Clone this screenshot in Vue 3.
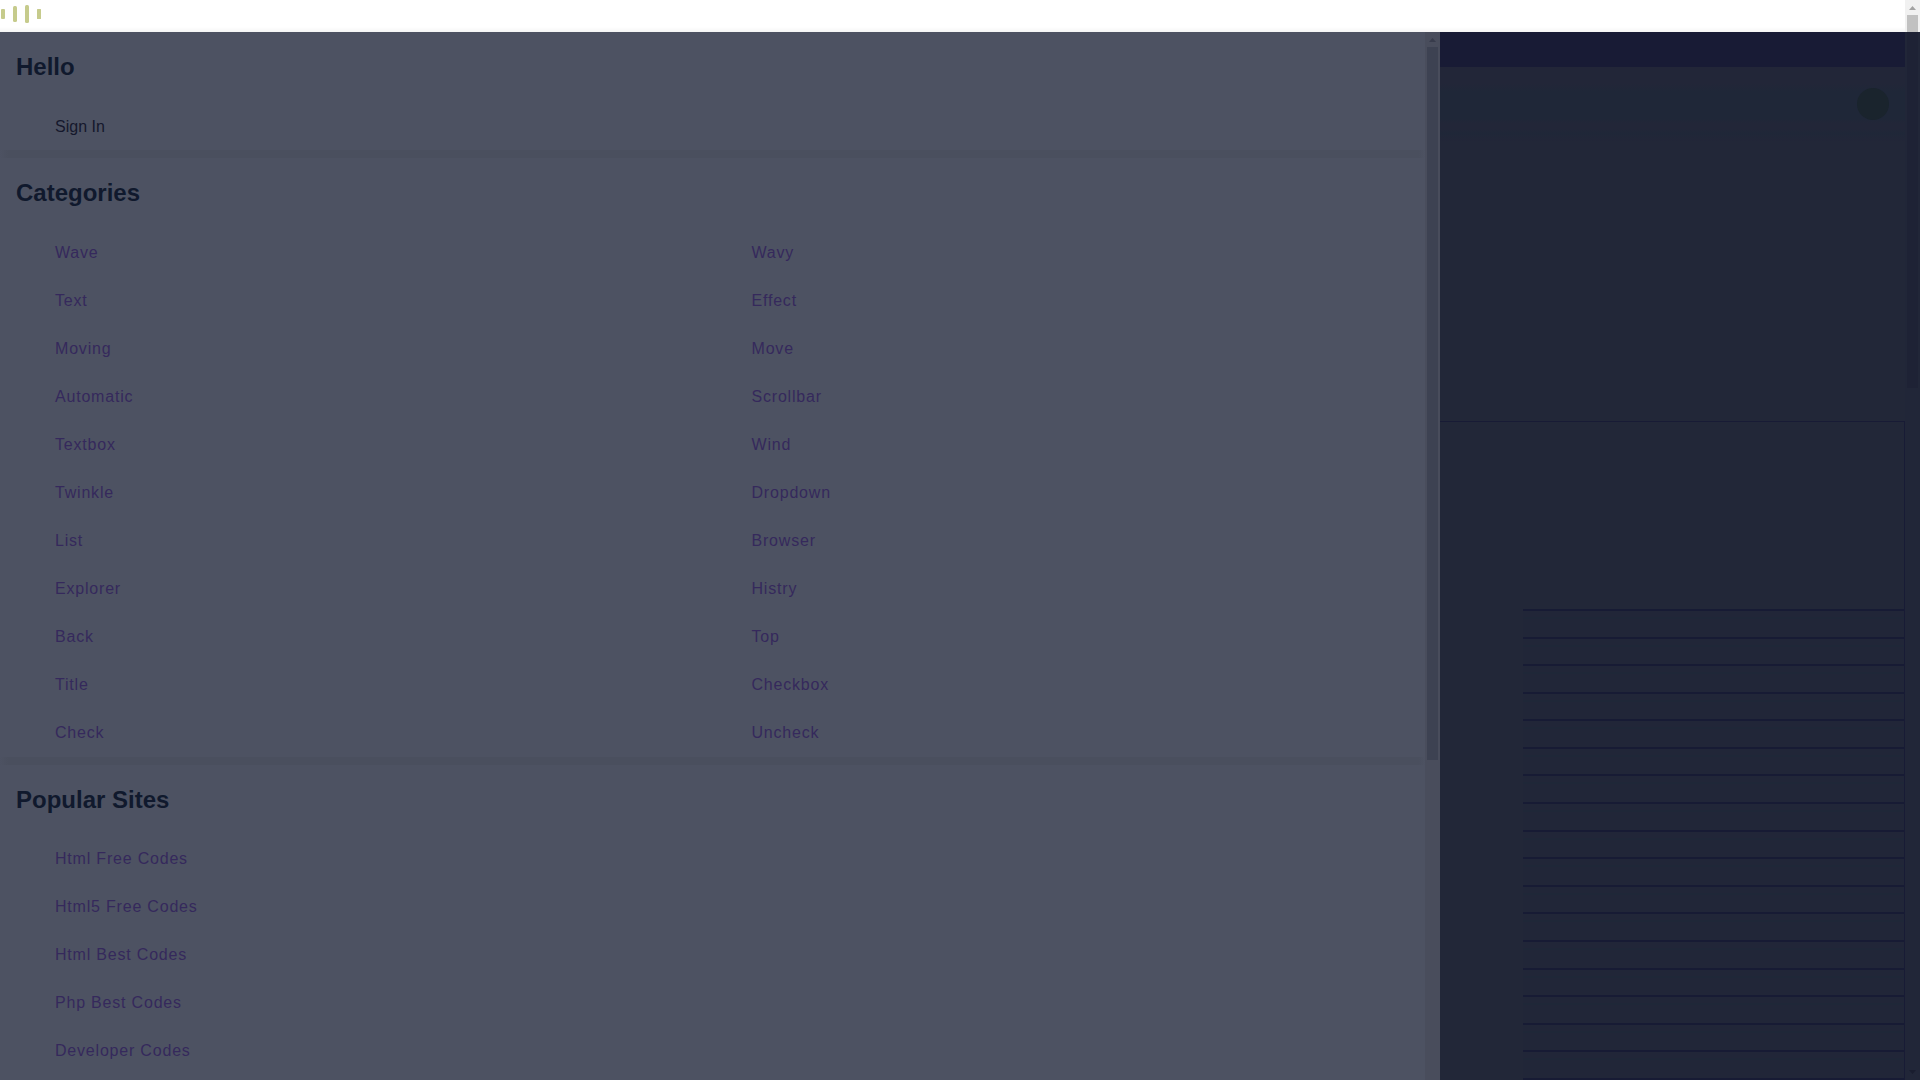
<script setup>
const categories = [
  'Wave', 'Wavy', 'Text', 'Effect', 'Moving', 'Move', 'Automatic', 'Scrollbar',
  'Textbox', 'Wind', 'Twinkle', 'Dropdown', 'List', 'Browser', 'Explorer', 'Histry',
  'Back', 'Top', 'Title', 'Checkbox', 'Check', 'Uncheck',
]
const sites = ['Html Free Codes', 'Html5 Free Codes', 'Html Best Codes', 'Php Best Codes', 'Developer Codes']
</script>

<template>
  <div class="page">
    <div class="main">
      <header class="loader-bar">
        <svg width="42" height="28" viewBox="0 0 42 28" fill="#c6cb8c" aria-hidden="true">
          <rect x="1" y="9" width="4" height="10" rx="1" />
          <rect x="13" y="6" width="4" height="16" rx="1.5" />
          <rect x="25" y="5" width="4" height="18" rx="1.5" />
          <rect x="37" y="9" width="4" height="10" rx="0.5" />
        </svg>
      </header>
      <div class="body">
        <aside class="drawer">
          <nav class="menu">
            <section>
              <h2>Hello</h2>
              <ul>
                <li><a class="sign-in" href="#signin">Sign In</a></li>
              </ul>
            </section>
            <div class="divider"></div>
            <section>
              <h2>Categories</h2>
              <ul class="two-columns">
                <li v-for="name in categories" :key="name"><a :href="'#' + name">{{ name }}</a></li>
              </ul>
            </section>
            <div class="divider"></div>
            <section>
              <h2>Popular Sites</h2>
              <ul>
                <li v-for="name in sites" :key="name"><a href="#sites">{{ name }}</a></li>
              </ul>
            </section>
          </nav>
          <div class="scroll inner">
            <span class="arrow up"></span>
            <span class="thumb"></span>
          </div>
        </aside>
        <main class="content">
          <div class="strip"></div>
          <div class="toolbar"><span class="avatar"></span></div>
          <div class="hero"></div>
          <div class="panel">
            <div class="lines">
              <span v-for="n in 18" :key="n" class="line"></span>
            </div>
          </div>
        </main>
      </div>
    </div>
    <div class="outer">
      <div class="scroll light">
        <span class="arrow up"></span>
        <span class="thumb"></span>
      </div>
      <div class="scroll dark">
        <span class="thumb"></span>
        <span class="arrow down"></span>
      </div>
    </div>
  </div>
</template>

<style>
body {
  overflow: hidden;
}
</style>

<style scoped>
.page {
  display: flex;
  height: 100vh;
  overflow: hidden;
  background: #222738;
  font-family: "Liberation Sans", Arial, sans-serif;
  font-size: 16px;
}
.main {
  flex: 1;
  min-width: 0;
  display: flex;
  flex-direction: column;
}
.loader-bar {
  flex: none;
  height: 32px;
  background: linear-gradient(#fff 27px, #f5f5f5 32px);
}
.loader-bar svg {
  display: block;
}
.body {
  flex: 1;
  min-height: 0;
  display: flex;
}
.drawer {
  flex: none;
  width: 75vw;
  display: flex;
  overflow: hidden;
  background: #4d5262;
}
.menu {
  flex: 1;
}
h2 {
  margin: 0;
  padding-left: 16px;
  font-size: 24px;
  line-height: 70px;
  color: #10192d;
}
ul {
  margin: 0;
  padding: 0 16px;
  list-style: none;
}
.two-columns {
  display: grid;
  grid-template-columns: 1fr 1fr;
  padding-top: 1px;
}
a {
  display: block;
  padding-left: 39px;
  line-height: 48px;
  letter-spacing: 0.05em;
  color: #35295c;
  text-decoration: none;
}
.sign-in {
  padding-top: 2px;
  line-height: 46px;
  letter-spacing: normal;
  color: #15182c;
}
.divider {
  height: 8px;
  background: linear-gradient(90deg, #4d5262, #4a4f5e 8px, #4a4f5e calc(100% - 6px), #4d5262);
}
.scroll {
  width: 15px;
  display: flex;
  flex-direction: column;
  align-items: center;
}
.thumb {
  width: 11px;
}
.arrow {
  flex: none;
  width: 7px;
  height: 4px;
  background: #a3a3a3;
}
.up {
  margin: 6px 0 5px;
  clip-path: polygon(50% 0, 100% 100%, 0 100%);
}
.down {
  margin: auto 0 6px;
  clip-path: polygon(0 0, 100% 0, 50% 100%);
}
.inner {
  background: #494d5c;
}
.inner .arrow {
  background: #383c4c;
}
.inner .thumb {
  height: 68%;
  background: #3d4252;
}
.content {
  flex: 1;
  min-width: 0;
  display: flex;
  flex-direction: column;
}
.strip {
  height: 35px;
  background: #181b35;
}
.toolbar {
  display: flex;
  align-items: center;
  justify-content: flex-end;
  height: 74px;
  padding-right: 16px;
  background: linear-gradient(#222638 17px, #1f2738 24px, #1f2738 52px, #222638 56px, #222638 62px, #1f2738 66px, #222638);
}
.avatar {
  width: 32px;
  height: 32px;
  border-radius: 50%;
  background: #1a242d;
}
.hero {
  height: 280px;
}
.panel {
  flex: 1;
  display: flex;
  padding-top: 187px;
  border-top: 1px solid #181b35;
  border-right: 1px solid #181b35;
}
.lines {
  flex: 1;
  margin-left: 83px;
  display: flex;
  flex-direction: column;
  justify-content: space-between;
  overflow: hidden;
  background: #212638;
}
.line {
  height: 2px;
  background: #171b34;
  box-shadow: 0 8px #1f2738;
}
.outer {
  display: flex;
  flex-direction: column;
}
.light {
  height: 32px;
  overflow: hidden;
  background: #f1f1f1;
}
.light .thumb {
  flex: 1;
  background: #c1c1c1;
}
.dark {
  flex: 1;
  background: #212638;
}
.dark .thumb {
  height: 34%;
  background: #1e2235;
}
.dark .arrow {
  background: #191d2f;
}
</style>
